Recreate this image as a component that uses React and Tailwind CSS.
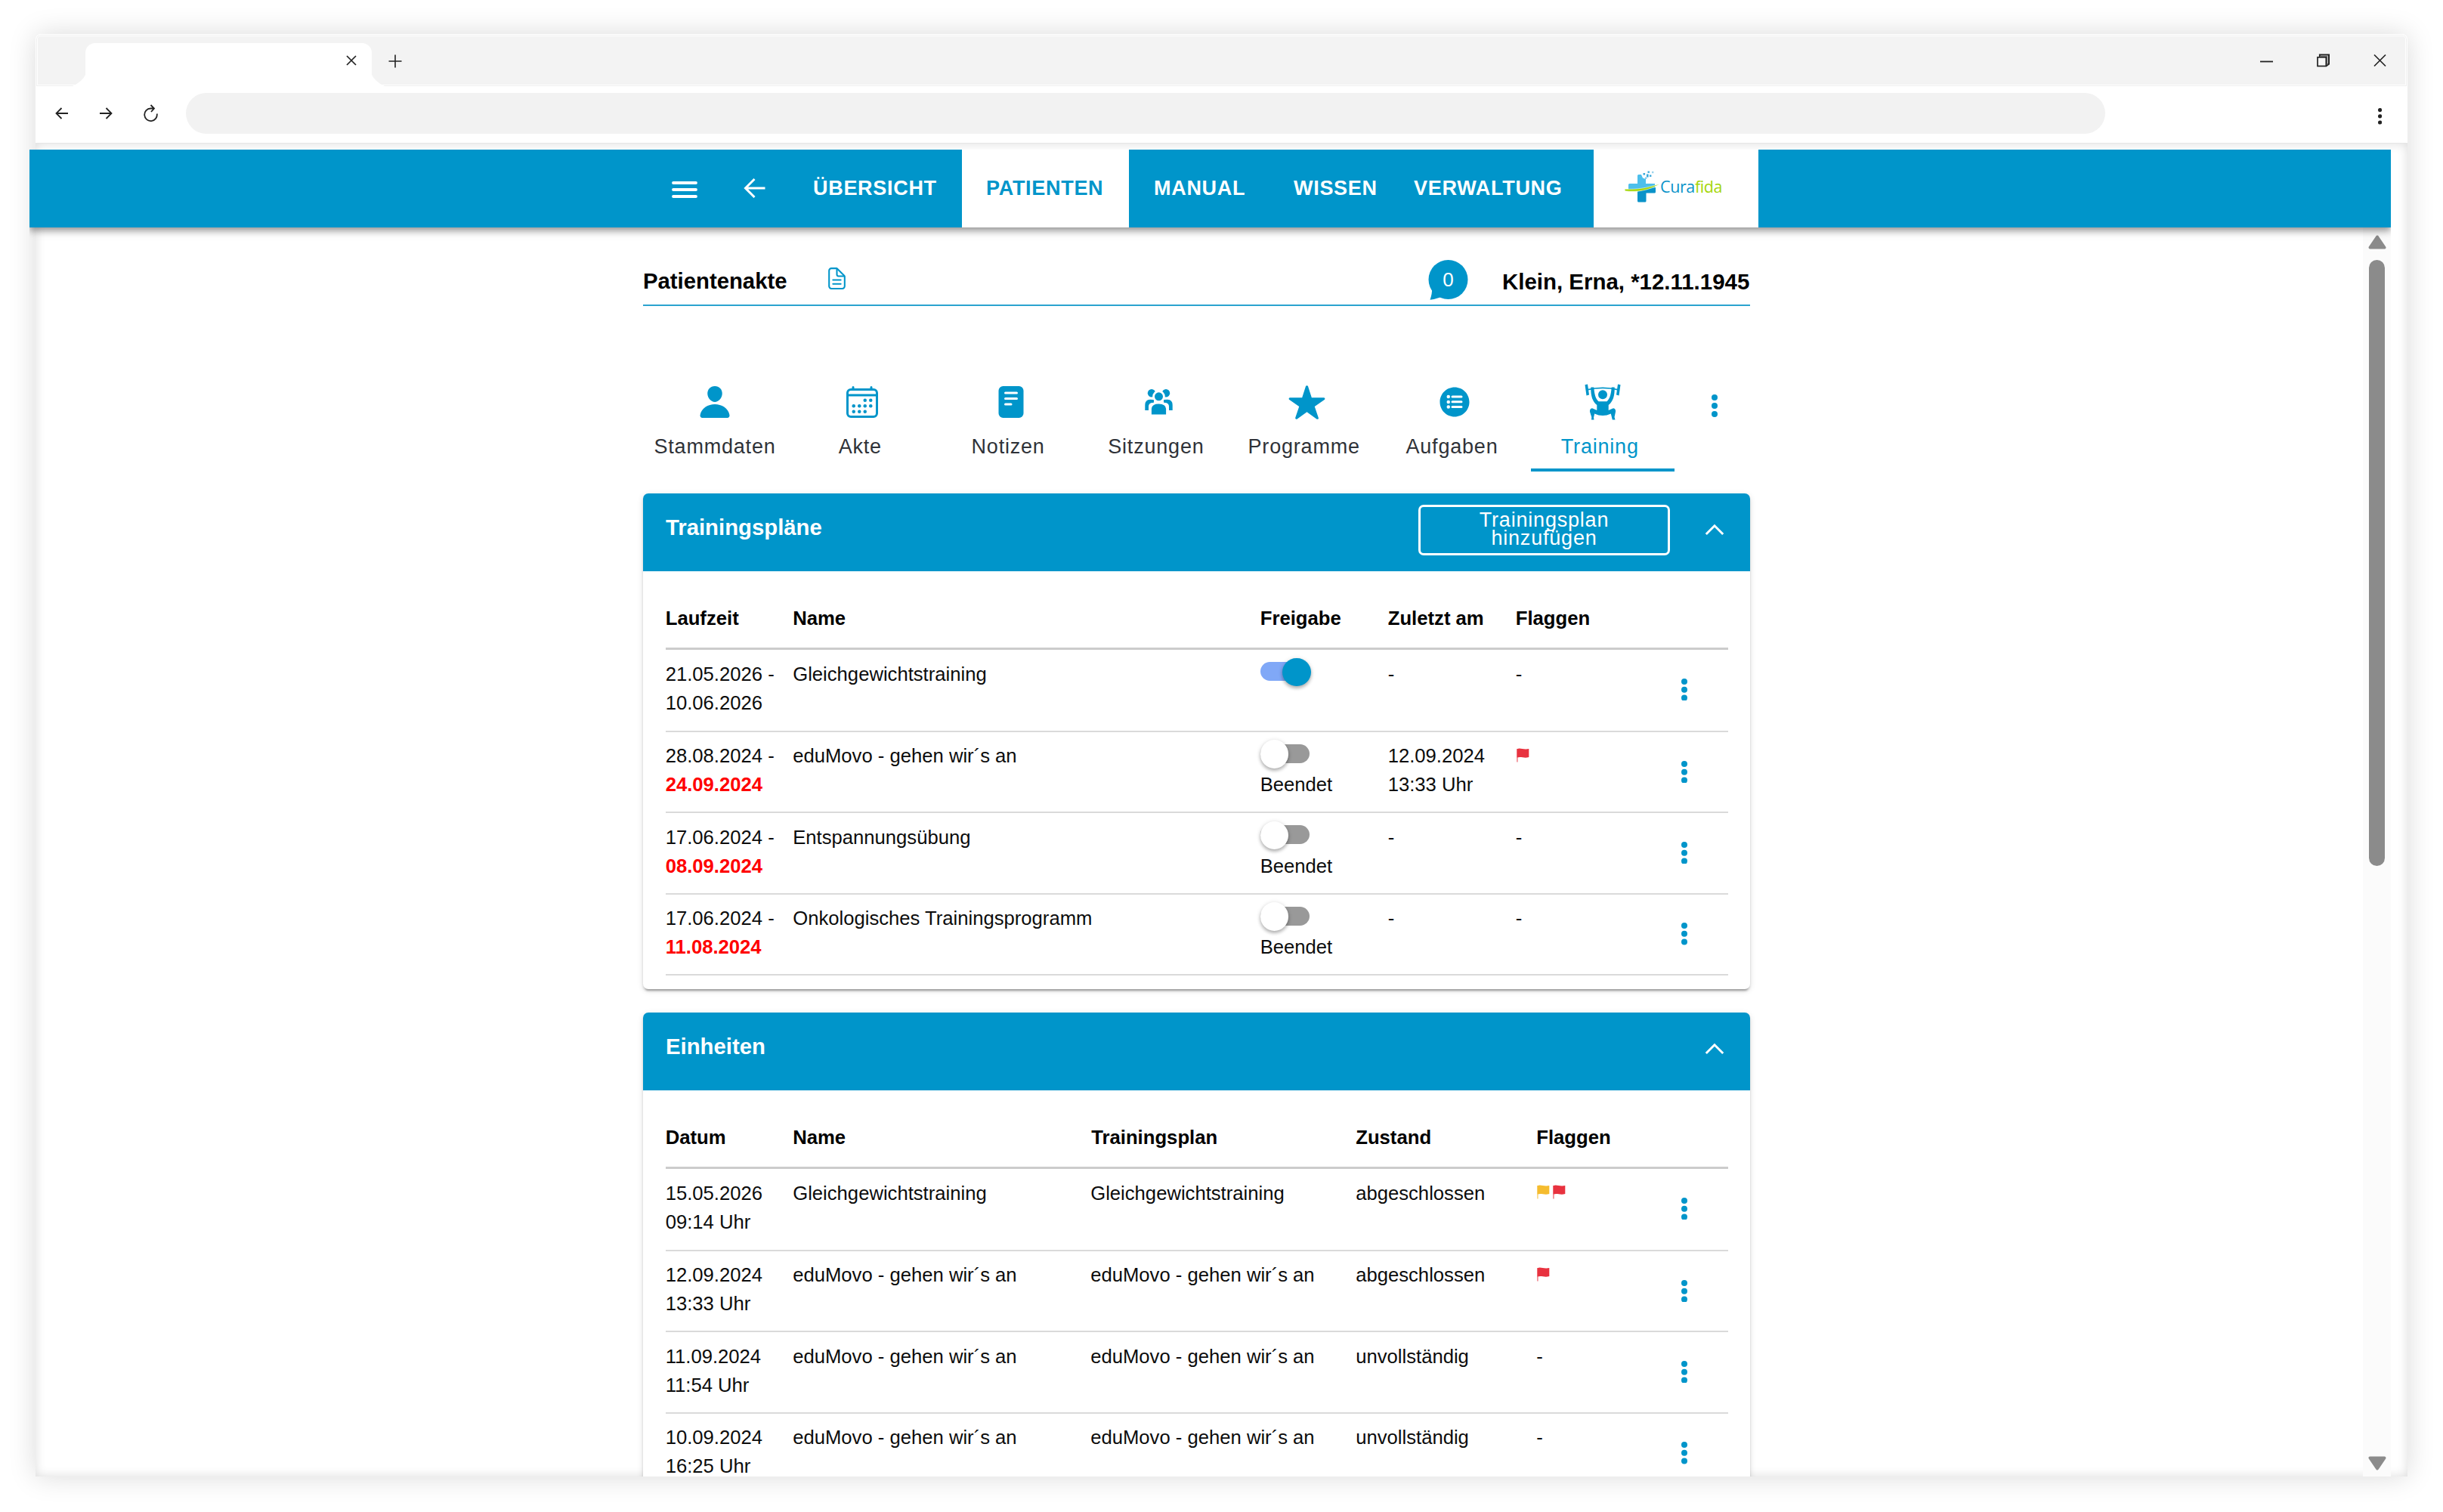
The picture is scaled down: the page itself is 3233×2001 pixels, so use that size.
import React from "react";
import {
  IoPerson,
  IoCalendarOutline,
  IoReader,
  IoStar,
  IoListCircle,
  IoDocumentTextOutline,
} from "react-icons/io5";

function Kebab({ gap = 10.8, r = 4 }) {
  const h = gap * 2 + r * 2;
  return (
    <svg width={r * 2} height={h} viewBox={`0 0 ${r * 2} ${h}`} fill="currentColor">
      <circle cx={r} cy={r} r={r} />
      <circle cx={r} cy={r + gap} r={r} />
      <circle cx={r} cy={r + gap * 2} r={r} />
    </svg>
  );
}

function Chevron() {
  return (
    <svg width="26" height="16" viewBox="0 0 26 16" fill="none" stroke="currentColor" strokeWidth="3">
      <path d="M1.8 14L13 2.8L24.2 14" />
    </svg>
  );
}

function Flag({ color }) {
  return (
    <svg width="17" height="19" viewBox="0 0 17 19">
      <path d="M0.9 1V18.5" stroke={color} strokeOpacity="0.6" strokeWidth="1.6" />
      <path d="M0.6 1.2C5 -0.8 9 2.6 16.3 1V12C9.500 14 6 10.600 0.600 12.600Z" fill={color} />
    </svg>
  );
}

function GroupIcon() {
  return (
    <svg width="37" height="34" viewBox="0 0 37 34" fill="currentColor">
      <circle cx="9" cy="5.300" r="5.200" />
      <circle cx="28" cy="5.300" r="5.200" />
      <path d="M0.300 28V21Q0.300 14 7 13.800L12 14V18H9Q5 19 5 23V28Z" />
      <path d="M36.700 28V21Q36.700 14 30 13.800L25 14V18H28Q32 19 32 23V28Z" />
      <circle cx="18.500" cy="9.800" r="6.900" stroke="white" strokeWidth="2.800" />
      <path
        d="M7.500 35V26Q8 18 18.500 18Q29 18 29.500 26V35Z"
        stroke="white"
        strokeWidth="2.800"
        strokeLinejoin="round"
      />
    </svg>
  );
}

function LifterIcon() {
  return (
    <svg width="48" height="48" viewBox="0 0 48 48" fill="currentColor">
      <path d="M0.500 1.200L4 0.500L6 14.500L2.500 15.500ZM47.500 1.200L44 0.500L42 14.500L45.500 15.500Z" />
      <path d="M3 7.800Q24 2.800 45 7.800" fill="none" stroke="currentColor" strokeWidth="1.800" />
      <circle cx="24" cy="14.300" r="6" />
      <path d="M8.300 4.500H12.300C13 14 14.500 19.500 18.500 23.300H29.500C33.500 19.500 35 14 35.700 4.500H39.700C40 16 37.500 23.500 31.700 28V35L38 32.300Q41.500 33 41 37L39.500 44L40.500 47.500H36.800L34.800 39.500Q24 44.500 13.200 39.500L12 44.500L12.500 47.500H9L9.300 44L7 37Q6.500 33 10 32.300L16.300 35V28C10.500 23.500 8 16 8.300 4.500Z" />
    </svg>
  );
}

function Logo() {
  return (
    <svg width="132" height="46" viewBox="0 0 132 46">
      <path d="M17 6.500Q17 5 18.500 5H22L24 9.500L28 11V17H40V22L28 26L5 25.500V18.500Q5 17 6.500 17H17Z" fill="#4dbfec" />
      <path d="M17 27.500L41 22V28Q41 29.500 39.500 29.500H28.500V40Q28.500 41.500 27 41.500H18.500Q17 41.500 17 40Z" fill="#0a93c9" />
      <path d="M0 24.200C18 24.800 28 23 46 17.500C32 26 18 28.500 0.500 26.800Z" fill="#a4d60a" stroke="#fff" strokeWidth="0.500" />
      <g fill="#3aa9dc">
        <rect x="24.500" y="3" width="2.600" height="2.600" />
        <rect x="30.500" y="0.500" width="2.400" height="2.400" />
        <rect x="36" y="0.800" width="2.400" height="2.400" opacity="0.500" />
        <rect x="29" y="4.500" width="2.600" height="4" />
        <rect x="33" y="5.500" width="2.400" height="2.400" />
        <rect x="27" y="8.500" width="2.400" height="2.400" opacity="0.600" />
      </g>
    </svg>
  );
}

function BrowserChrome() {
  return (
    <>
      <div className="flex h-[69px] shrink-0 rounded-t-[7px] border border-b-0 border-white bg-[#f3f3f3] pt-[11px] text-[#222] shadow-[inset_0_0_0_1px_#efefef,inset_0_0_0_2px_#fff]">
        <svg className="mt-[42px] ml-[48px] shrink-0" width="17" height="15" viewBox="0 0 17 15">
          <path d="M17 0Q13 9 0 15H17Z" fill="#fff" />
        </svg>
        <div className="flex h-[57px] w-[379px] shrink-0 items-center justify-end rounded-t-[13px] bg-white pr-[20px] pb-[12px]">
          <svg width="14" height="14" viewBox="0 0 14 14" stroke="currentColor" strokeWidth="1.700">
            <path d="M1 1L13 13M13 1L1 13" />
          </svg>
        </div>
        <svg className="mt-[42px] shrink-0" width="17" height="15" viewBox="0 0 17 15">
          <path d="M0 0Q4 9 17 15H0Z" fill="#fff" />
        </svg>
        <svg className="mt-[15px] ml-[5px]" width="18" height="18" viewBox="0 0 18 18" stroke="currentColor" strokeWidth="1.600">
          <path d="M9 0.500V17.500M0.500 9H17.500" />
        </svg>
        <div className="mt-[14px] mr-[27px] ml-auto flex h-[18px] items-center gap-[58px]">
          <svg width="17" height="18" viewBox="0 0 17 18" stroke="currentColor" strokeWidth="1.800">
            <path d="M0 10.500H17" />
          </svg>
          <svg width="17" height="18" viewBox="0 0 17 18" fill="none" stroke="currentColor">
            <path d="M4 4V1.500H16V13.500L12.500 16" strokeWidth="2.200" />
            <path d="M4 3.500H13.500V15" stroke="#777" strokeWidth="1.500" />
            <rect x="1" y="4.800" width="11.300" height="11.700" fill="#f6f6f6" strokeWidth="1.700" />
          </svg>
          <svg width="17" height="18" viewBox="0 0 17 18" stroke="currentColor" strokeWidth="1.700">
            <path d="M1 1.500L16 16.500M16 1.500L1 16.500" />
          </svg>
        </div>
      </div>
      <div className="flex h-[75px] shrink-0 items-start rounded-t-[9px] bg-white pt-[9px] text-[#222]">
        <svg className="mt-[19px] ml-[26px]" width="17" height="16" viewBox="0 0 17 16" fill="none" stroke="currentColor" strokeWidth="1.800">
          <path d="M8.500 1L1.500 8L8.500 15M1 8H17" />
        </svg>
        <svg className="mt-[19px] ml-[42px]" width="17" height="16" viewBox="0 0 17 16" fill="none" stroke="currentColor" strokeWidth="1.800">
          <path d="M8.500 1L15.500 8L8.500 15M0 8H16" />
        </svg>
        <svg className="mt-[15px] ml-[41px]" width="19" height="23" viewBox="0 0 19 23" fill="none" stroke="currentColor" strokeWidth="1.800">
          <path d="M17.700 12.500A8.300 8.300 0 1 1 9.400 5.500H13.500M9.500 1L14 5.500L10 10" />
        </svg>
        <div className="ml-[37px] h-[54px] w-[2540px] rounded-full bg-[#f2f2f2]" />
        <div className="mt-[20px] mr-[34px] ml-auto flex">
          <Kebab gap={8.2} r={2.6} />
        </div>
      </div>
    </>
  );
}

function AppBar() {
  return (
    <header className="relative z-10 -ml-[8px] flex h-[102.500px] w-[3125px] shrink-0 items-center bg-[#0095ca] text-[27px] font-bold tracking-[0.700px] whitespace-nowrap text-white [clip-path:inset(0_0_-30px_0)] shadow-[0_3px_7px_-2px_rgba(0,0,0,0.200),0_6px_8px_rgba(0,0,0,0.200),0_2px_16px_rgba(0,0,0,0.160)]">
      <svg className="mt-[3px] ml-[850px] shrink-0" width="34" height="24" viewBox="0 0 34 24" stroke="currentColor" strokeWidth="3.800" strokeLinecap="round">
        <path d="M2 3H32M2 12H32M2 21H32" />
      </svg>
      <svg className="ml-[61px] shrink-0" width="29" height="26" viewBox="0 0 29 26" fill="none" stroke="currentColor" strokeWidth="3">
        <path d="M14.500 1L2.500 13L14.500 25M2 13H28.500" />
      </svg>
      <div className="ml-[62px] w-[198px] pl-[1px]">ÜBERSICHT</div>
      <div className="flex h-full w-[221px] items-center bg-white pl-[32px] text-[#0095ca]">PATIENTEN</div>
      <div className="w-[218px] pl-[33px]">MANUAL</div>
      <div className="w-[159px]">WISSEN</div>
      <div className="w-[238px]">VERWALTUNG</div>
      <div className="relative h-full w-[218px] bg-white pt-[28px] pl-[41px]">
        <Logo />
        <div className="absolute top-[34px] left-[88px] font-['Open_Sans','Noto_Sans',sans-serif] text-[21.500px] leading-[30px] font-medium tracking-[-0.400px] text-[#0a93c9]">
          Cura<span className="text-[#a4d60a]">fida</span>
        </div>
      </div>
    </header>
  );
}

function PatientBar() {
  return (
    <div className="flex h-[104.500px] items-start border-b-[2.500px] border-[#2ba3cf] text-[29.300px] leading-[40px] font-bold whitespace-nowrap">
      <div className="mt-[51px] w-[240px]">Patientenakte</div>
      <IoDocumentTextOutline className="mt-[51px] text-[33px] text-[#0095ca]" />
      <div className="relative mt-[43px] ml-auto flex h-[53px] w-[53px] items-center justify-center text-[26px] font-normal text-white">
        <svg className="absolute inset-0" width="53" height="53" viewBox="0 0 53 53" fill="#0095ca">
          <circle cx="26.500" cy="26" r="26" />
          <path d="M5 38Q5.500 44 2.500 52.700Q9 52 16 49.500Z" />
        </svg>
        <span className="relative">0</span>
      </div>
      <div className="mt-[52.500px] ml-[45px] w-[328px] text-[29.450px]">Klein, Erna, *12.11.1945</div>
    </div>
  );
}

const tabs = [
  { label: "Stammdaten", icon: <IoPerson className="text-[48px]" /> },
  { label: "Akte", icon: <IoCalendarOutline className="mr-[1px] text-[48px]" />, shift: true },
  { label: "Notizen", icon: <IoReader className="text-[48px]" />, shift: true },
  { label: "Sitzungen", icon: <GroupIcon />, shift: true },
  { label: "Programme", icon: <IoStar className="ml-[1px] text-[51px]" />, shift: true },
  { label: "Aufgaben", icon: <IoListCircle className="ml-[1px] text-[48px]" />, shift: true },
  { label: "Training", icon: <LifterIcon />, shift: true, active: true },
];

function TabBar() {
  return (
    <nav className="mt-[103px] flex">
      <div className="flex gap-[5.800px]">
        {tabs.map((t) => (
          <div key={t.label} className="flex w-[190px] flex-col items-center">
            <div className="flex h-[48px] items-center justify-center text-[#0095ca]">{t.icon}</div>
            <div
              className={`mt-[18.500px] text-[27px] leading-[32px] tracking-[0.800px] ${t.shift ? "pr-[7px]" : ""} ${
                t.active ? "text-[#0095ca]" : "text-[#2f3238]"
              }`}
            >
              {t.label}
            </div>
            <div className={`mt-[13.500px] h-[4px] w-full ${t.active ? "bg-[#0095ca]" : ""}`} />
          </div>
        ))}
      </div>
      <div className="flex w-[108px] justify-center pt-[14px] pl-[7px] text-[#0095ca]">
        <Kebab gap={11} />
      </div>
    </nav>
  );
}

function Card({ title, action, className, children }) {
  return (
    <section
      className={`shrink-0 rounded-[7px] bg-white shadow-[0_5px_2px_-3px_rgba(0,0,0,0.200),0_3px_3px_rgba(0,0,0,0.140),0_2px_8px_rgba(0,0,0,0.120)] ${className}`}
    >
      <div className="flex h-[103px] items-start rounded-t-[7px] bg-[#0095ca] pl-[30px] text-white">
        <h2 className="mt-[25.500px] text-[29.300px] leading-[40px] font-bold">{title}</h2>
        <div className="mt-[15px] mr-[34px] ml-auto flex h-[67px] items-center gap-[46px]">
          {action}
          <Chevron />
        </div>
      </div>
      <div className="pr-[29px] pl-[29.700px]">{children}</div>
    </section>
  );
}

function Switch({ on, label }) {
  return (
    <div>
      <div className="relative -mt-[2px] h-[38px] w-[67px]">
        <div className={`absolute left-0 h-[25px] w-[65.500px] rounded-full ${on ? "top-[5px] bg-[#80a8f7]" : "top-[5.500px] bg-[#999]"}`} />
        <div
          className={`absolute top-0 h-[37.500px] w-[37.500px] rounded-full shadow-[0_3px_4px_rgba(0,0,0,0.240),0_1px_6px_rgba(0,0,0,0.140)] ${
            on ? "right-0 bg-[#0095ca]" : "left-0 bg-white"
          }`}
        />
      </div>
      {label && <div className="mt-[2px]">{label}</div>}
    </div>
  );
}

const planCols = "grid grid-cols-[168.500px_618.500px_169px_169px_194px_58px_1fr]";
const unitCols = "grid grid-cols-[168.500px_394px_351px_239px_166.500px_58px_1fr]";

function HeadRow({ cols, names }) {
  return (
    <div className={`${cols} h-[104px] border-b-[3px] border-[#ccc] pt-[43px] text-[25.700px] leading-[38px] font-bold text-black`}>
      {names.map((n) => (
        <div key={n} className={n === "Trainingsplan" ? "pl-[1px]" : ""}>
          {n}
        </div>
      ))}
    </div>
  );
}

function Row({ cols, first, children }) {
  return (
    <div
      className={`${cols} ${first ? "h-[109.500px] pt-[13px]" : "h-[107.400px] pt-[12.300px]"} border-b-2 border-[#dadada] text-[25.650px] leading-[38px] whitespace-nowrap text-[#0c0c0c]`}
    >
      {children}
      <div className="flex h-[80px] items-center justify-center text-[#0095ca]">
        <Kebab />
      </div>
    </div>
  );
}

const plans = [
  { from: "21.05.2026", to: "10.06.2026", name: "Gleichgewichtstraining", on: true },
  { from: "28.08.2024", to: "24.09.2024", name: "eduMovo - gehen wir´s an", last: ["12.09.2024", "13:33 Uhr"], flags: ["#e8323f"] },
  { from: "17.06.2024", to: "08.09.2024", name: "Entspannungsübung" },
  { from: "17.06.2024", to: "11.08.2024", name: "Onkologisches Trainingsprogramm" },
];

const units = [
  { date: "15.05.2026", time: "09:14 Uhr", name: "Gleichgewichtstraining", state: "abgeschlossen", flags: ["#f5bc2f", "#e8323f"] },
  { date: "12.09.2024", time: "13:33 Uhr", name: "eduMovo - gehen wir´s an", state: "abgeschlossen", flags: ["#e8323f"] },
  { date: "11.09.2024", time: "11:54 Uhr", name: "eduMovo - gehen wir´s an", state: "unvollständig" },
  { date: "10.09.2024", time: "16:25 Uhr", name: "eduMovo - gehen wir´s an", state: "unvollständig" },
];

function Flags({ list }) {
  if (!list) return <div>-</div>;
  return (
    <div className="flex gap-[4px] pt-[8.500px] pl-[1px]">
      {list.map((c) => (
        <Flag key={c} color={c} />
      ))}
    </div>
  );
}

function Scrollbar() {
  return (
    <div className="mr-[22px] ml-auto flex w-[37px] shrink-0 flex-col items-center bg-[#fbfbfb] pt-[10px] pb-[8px]">
      <svg className="shrink-0" width="24" height="19" viewBox="0 0 24 19" fill="#8b8b8b" stroke="#8b8b8b" strokeWidth="4" strokeLinejoin="round">
        <path d="M12 2.500L21.500 16.500H2.500Z" />
      </svg>
      <div className="mt-[14px] h-[802px] w-[21px] shrink-0 rounded-full bg-[#8b8b8b]" />
      <svg className="mt-auto shrink-0" width="24" height="19" viewBox="0 0 24 19" fill="#8b8b8b" stroke="#8b8b8b" strokeWidth="4" strokeLinejoin="round">
        <path d="M12 16.500L2.500 2.500H21.500Z" />
      </svg>
    </div>
  );
}

export default function App() {
  return (
    <div className="h-[2001px] w-[3233px] overflow-hidden bg-white pt-[45px] pl-[47px] font-['Liberation_Sans',Arial,sans-serif] text-black">
      <div className="flex h-[1909px] w-[3139px] flex-col rounded-t-[8px] bg-white shadow-[0_0_36px_rgba(0,0,0,0.150)]">
        <BrowserChrome />
        <div className="flex h-[1765px] flex-col border-t border-[#e6e6e6] bg-white pt-[8px] shadow-[inset_0_0_14px_rgba(0,0,0,0.140)]">
          <AppBar />
          <div className="flex min-h-0 flex-1">
            <div className="flex h-full w-[3079px] flex-col overflow-hidden pl-[804px]">
              <main className="flex w-[1465px] flex-col">
                <PatientBar />
                <TabBar />
                <Card
                  title="Trainingspläne"
                  className="mt-[28.500px] h-[656px]"
                  action={
                    <button className="flex h-[67px] w-[333px] items-center justify-center rounded-[7px] border-[3px] border-white px-[60px] pb-[2px] text-center text-[27px] leading-[24px] tracking-[0.800px]">
                      Trainingsplan hinzufügen
                    </button>
                  }
                >
                  <HeadRow cols={planCols} names={["Laufzeit", "Name", "Freigabe", "Zuletzt am", "Flaggen"]} />
                  {plans.map((p, i) => (
                    <Row key={p.to} cols={planCols} first={i === 0}>
                      <div>
                        <div>{p.from} -</div>
                        <div className={p.on ? "" : "font-bold text-[#f00]"}>{p.to}</div>
                      </div>
                      <div>{p.name}</div>
                      <Switch on={p.on} label={p.on ? null : "Beendet"} />
                      <div>{p.last ? p.last.map((l) => <div key={l}>{l}</div>) : "-"}</div>
                      <Flags list={p.flags} />
                    </Row>
                  ))}
                </Card>
                <Card title="Einheiten" className="mt-[31px] h-[760px]">
                  <HeadRow cols={unitCols} names={["Datum", "Name", "Trainingsplan", "Zustand", "Flaggen"]} />
                  {units.map((u, i) => (
                    <Row key={u.date} cols={unitCols} first={i === 0}>
                      <div>
                        <div>{u.date}</div>
                        <div>{u.time}</div>
                      </div>
                      <div>{u.name}</div>
                      <div>{u.name}</div>
                      <div>{u.state}</div>
                      <Flags list={u.flags} />
                    </Row>
                  ))}
                </Card>
              </main>
            </div>
            <Scrollbar />
          </div>
        </div>
      </div>
    </div>
  );
}
